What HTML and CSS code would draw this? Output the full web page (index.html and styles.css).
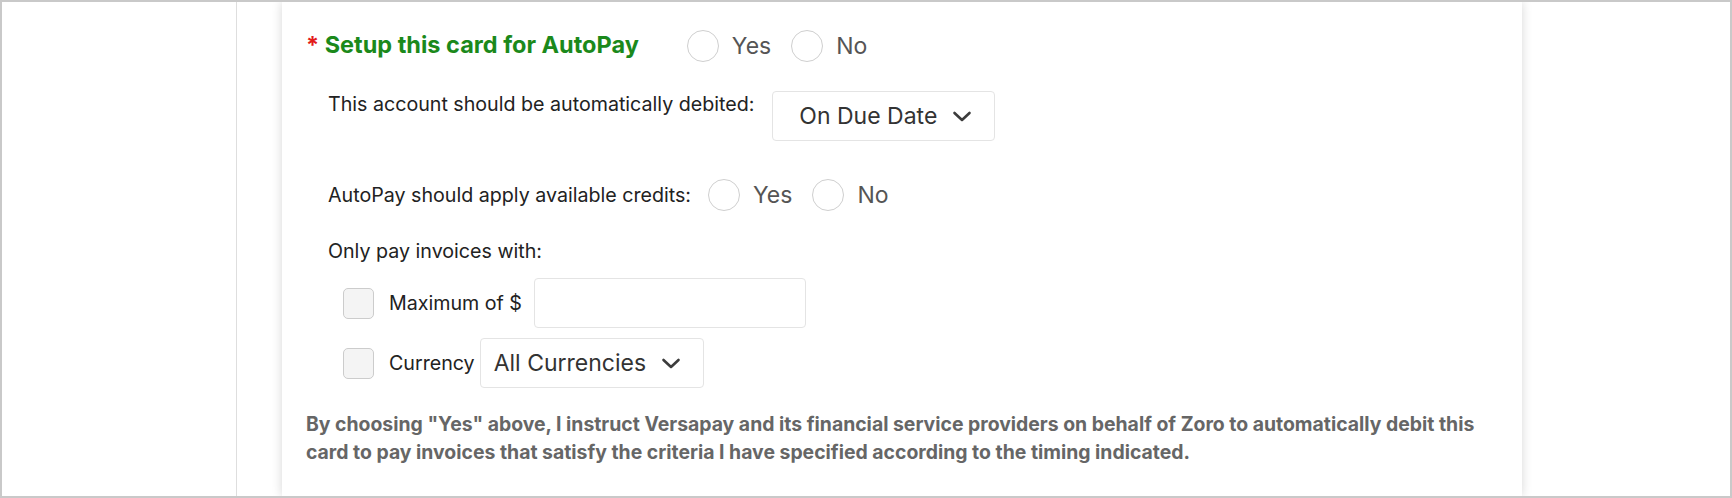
FILE: index.html
```html
<!DOCTYPE html>
<html lang="en">
<head>
<meta charset="utf-8">
<title>AutoPay setup</title>
<link rel="stylesheet" href="styles.css">
</head>
<body>
<div class="frame">
  <div class="side-left"></div>
  <div class="gutter"></div>
  <main class="card">
    <div class="row title-row">
      <h2 class="title"><span class="req">*</span> Setup this card for AutoPay</h2>
      <div class="radios radios-title">
        <label class="radio"><span class="circle"></span><span class="rlabel">Yes</span></label>
        <label class="radio"><span class="circle"></span><span class="rlabel">No</span></label>
      </div>
    </div>

    <div class="row debit-row">
      <span class="label label-top">This account should be automatically debited:</span>
      <div class="select select-due">
        <span class="select-text">On Due Date</span>
        <svg class="chev" width="20" height="11" viewBox="0 0 20 11"><polyline points="2.5,2 10,9 17.5,2" fill="none" stroke="#3c3c3c" stroke-width="2.6" stroke-linecap="round" stroke-linejoin="round"/></svg>
      </div>
    </div>

    <div class="row credits-row">
      <span class="label">AutoPay should apply available credits:</span>
      <div class="radios radios-credits">
        <label class="radio"><span class="circle"></span><span class="rlabel">Yes</span></label>
        <label class="radio"><span class="circle"></span><span class="rlabel">No</span></label>
      </div>
    </div>

    <div class="row only-row">
      <span class="label">Only pay invoices with:</span>
    </div>

    <div class="row check-row max-row">
      <span class="checkbox"></span>
      <span class="label check-label">Maximum of $</span>
      <div class="text-input"></div>
    </div>

    <div class="row check-row cur-row">
      <span class="checkbox"></span>
      <span class="label check-label cur-label">Currency</span>
      <div class="select select-cur">
        <span class="select-text">All Currencies</span>
        <svg class="chev" width="20" height="11" viewBox="0 0 20 11"><polyline points="2.5,2 10,9 17.5,2" fill="none" stroke="#3c3c3c" stroke-width="2.6" stroke-linecap="round" stroke-linejoin="round"/></svg>
      </div>
    </div>

    <p class="disclaimer">By choosing "Yes" above, I instruct Versapay and its financial service providers on behalf of Zoro to automatically debit this card to pay invoices that satisfy the criteria I have specified according to the timing indicated.</p>
  </main>
  <div class="side-right"></div>
</div>
</body>
</html>
```

FILE: styles.css
```css
* { box-sizing: border-box; }

html, body {
  margin: 0;
  padding: 0;
  background: #ffffff;
}

body {
  font-family: Inter, "Liberation Sans", Arial, sans-serif;
  color: #222222;
}

.frame {
  width: 1732px;
  height: 498px;
  border: 2px solid #c9c9c9;
  display: flex;
  overflow: hidden;
  background: #ffffff;
}

.side-left {
  width: 235px;
  flex: 0 0 235px;
  border-right: 1px solid #dedede;
}

.gutter {
  width: 45px;
  flex: 0 0 45px;
}

.card {
  width: 1240px;
  flex: 0 0 1240px;
  background: #ffffff;
  box-shadow: 0 0 10px rgba(0, 0, 0, 0.16);
  padding: 28px 24px 0 24px;
  position: relative;
  z-index: 1;
}

.side-right {
  flex: 1 1 auto;
}

.row {
  display: flex;
  align-items: center;
}

.title-row {
  height: 32px;
}

.title {
  margin: 0;
  font-size: 23.5px;
  font-weight: 700;
  color: #1b891b;
  line-height: 30px;
  margin-top: -2px;
}

.req {
  color: #e31b1b;
}

.radios {
  display: flex;
  align-items: center;
}

.radios-title {
  margin-left: 48px;
}

.radio {
  display: flex;
  align-items: center;
}

.radio + .radio {
  margin-left: 20px;
}

.circle {
  width: 32px;
  height: 32px;
  border: 1.5px solid #cfcfcf;
  border-radius: 50%;
  background: #ffffff;
}

.rlabel {
  margin-left: 13px;
  font-size: 23px;
  color: #555555;
  line-height: 30px;
}

.label {
  font-size: 19.65px;
  line-height: 26px;
  color: #222222;
}

.debit-row {
  margin-top: 29px;
  padding-left: 22px;
  align-items: flex-start;
}

.select {
  display: flex;
  align-items: center;
  justify-content: space-between;
  border: 1px solid #e4e4e4;
  border-radius: 4px;
  background: #ffffff;
}

.select-text {
  font-size: 23px;
  color: #333333;
  line-height: 26px;
}

.chev {
  display: block;
}

.select-due {
  width: 223px;
  height: 50px;
  margin-left: 18px;
  padding: 0 22px 0 26px;
}

.credits-row {
  margin-top: 38px;
  padding-left: 22px;
}

.radios-credits {
  margin-left: 17px;
}

.only-row {
  margin-top: 27px;
  padding-left: 22px;
}

.check-row {
  padding-left: 37px;
}

.max-row {
  margin-top: 14px;
}

.checkbox {
  width: 31px;
  height: 31px;
  border: 1.5px solid #cccccc;
  border-radius: 5px;
  background: #f4f4f4;
}

.check-label {
  margin-left: 15px;
}

.text-input {
  width: 272px;
  height: 50px;
  margin-left: 12px;
  border: 1px solid #e4e4e4;
  border-radius: 4px;
  background: #ffffff;
}

.cur-row {
  margin-top: 10px;
}

.select-cur {
  width: 224px;
  height: 50px;
  margin-left: 5px;
  padding: 0 22px 0 13px;
}

.disclaimer {
  margin: 22px 0 0 0;
  font-size: 19.4px;
  font-weight: 700;
  line-height: 28px;
  color: #666666;
}
```
